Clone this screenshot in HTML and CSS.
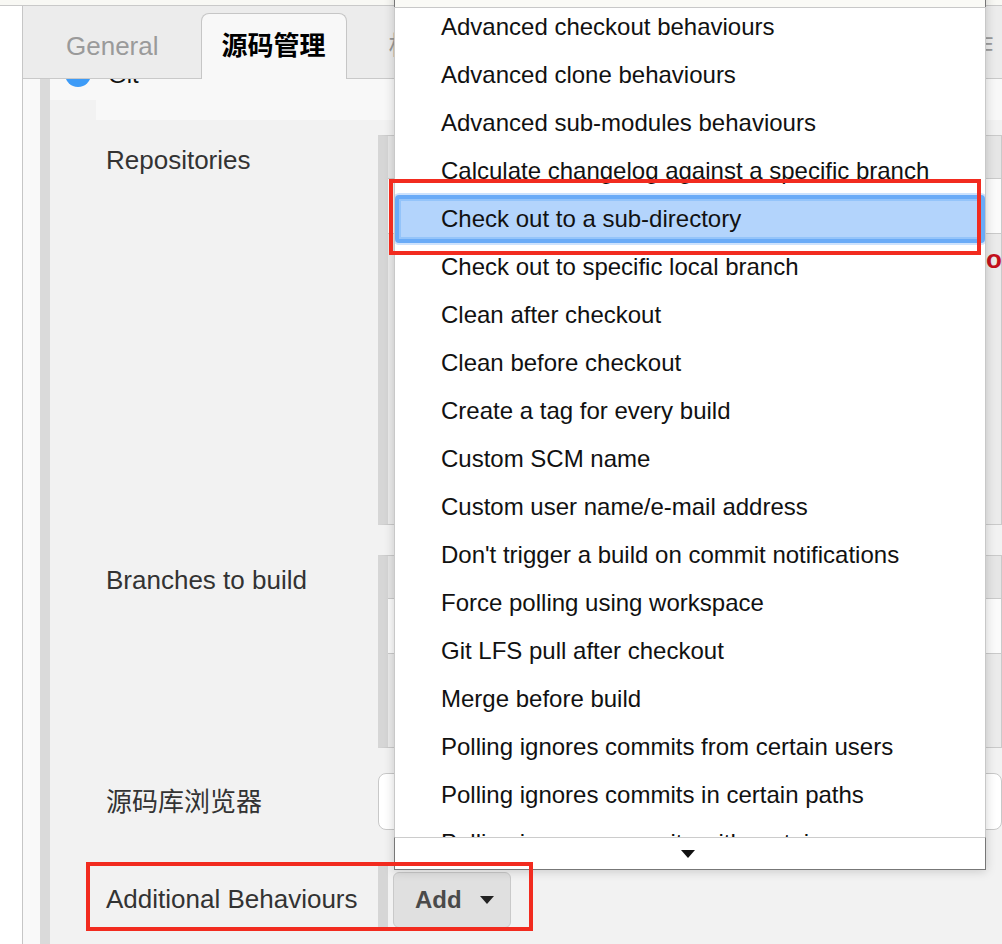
FILE: index.html
```html
<!DOCTYPE html>
<html lang="zh-CN">
<head>
<meta charset="utf-8">
<title>Jenkins - 源码管理</title>
<link rel="stylesheet" href="styles.css">
</head>
<body>
<div class="topstrip"></div>
<div class="panel">
  <div class="tabbar">
    <div class="tab">General</div>
    <div class="tab active">源码管理</div>
    <div class="tab">构建触发器</div>
    <div class="tab">构建环境</div>
    <div class="tab">构建</div>
    <div class="tab">构建后操作</div>
  </div>
  <div class="content">
    <div class="gutter"></div>
    <div class="stripe"></div>
    <div class="main">
      <div class="radio-row"><span class="radio"></span><span class="radio-label">Git</span></div>
      <div class="radio-body"></div>

      <div class="row row-repos">
        <div class="label">Repositories</div>
        <div class="field">
          <div class="chunk chunk-repos">
            <div class="chunk-head"></div>
            <div class="chunk-input"></div>
            <div class="error">onnect</div>
          </div>
        </div>
      </div>

      <div class="row row-branches">
        <div class="label">Branches to build</div>
        <div class="field">
          <div class="chunk chunk-branches">
            <div class="chunk-head"></div>
            <div class="chunk-input"></div>
          </div>
        </div>
      </div>

      <div class="row row-browser">
        <div class="label">源码库浏览器</div>
        <div class="field">
          <div class="select"></div>
        </div>
      </div>

      <div class="row row-additional">
        <div class="label">Additional Behaviours</div>
        <div class="field field-add">
          <div class="add-bar"></div>
          <button class="add-btn">Add<span class="caret"></span></button>
        </div>
      </div>
    </div>
  </div>
</div>

<div class="menu">
  <div class="menu-top"></div>
  <div class="menu-list">
    <ul class="menu-items">
      <li>Advanced checkout behaviours</li>
      <li>Advanced clone behaviours</li>
      <li>Advanced sub-modules behaviours</li>
      <li>Calculate changelog against a specific branch</li>
      <li class="selected">Check out to a sub-directory</li>
      <li>Check out to specific local branch</li>
      <li>Clean after checkout</li>
      <li>Clean before checkout</li>
      <li>Create a tag for every build</li>
      <li>Custom SCM name</li>
      <li>Custom user name/e-mail address</li>
      <li>Don't trigger a build on commit notifications</li>
      <li>Force polling using workspace</li>
      <li>Git LFS pull after checkout</li>
      <li>Merge before build</li>
      <li>Polling ignores commits from certain users</li>
      <li>Polling ignores commits in certain paths</li>
      <li>Polling ignores commits with certain messages</li>
    </ul>
  </div>
  <div class="menu-bottom"><span class="menu-arrow"></span></div>
</div>

<div class="mark mark-item"></div>
<div class="mark mark-add"></div>
</body>
</html>
```

FILE: styles.css
```css
html, body {
  margin: 0;
  padding: 0;
  overflow: hidden;
}
body {
  width: 1002px;
  height: 944px;
  background: #ffffff;
  font-family: "Liberation Sans", "Noto Sans CJK SC", sans-serif;
  color: #333;
  position: relative;
}

.topstrip {
  height: 5px;
  background: #f8f8f4;
  border-bottom: 1px solid #c9c9c9;
}

.panel {
  margin-left: 22px;
  border-left: 1px solid #c6c6c6;
  height: 938px;
  display: flex;
  flex-direction: column;
  min-width: 0;
  overflow: hidden;
}

/* tabs */
.tabbar {
  height: 72px;
  flex-shrink: 0;
  background: #ececec;
  border-bottom: 1px solid #c9c9c9;
  display: flex;
  align-items: flex-end;
  padding-left: 22px;
  gap: 21px;
  white-space: nowrap;
}
.tab {
  flex-shrink: 0;
  height: 65px;
  line-height: 64px;
  padding: 0 20px;
  border: 1px solid transparent;
  border-bottom: none;
  margin-bottom: -1px;
  font-size: 26px;
  color: #9a9a9a;
}
.tab.active {
  background: #f8f8f8;
  border-color: #c6c6c6;
  border-radius: 8px 8px 0 0;
  color: #000;
  font-weight: bold;
}

/* content */
.content {
  flex: 1;
  display: flex;
  min-width: 0;
}
.gutter {
  width: 17px;
  flex-shrink: 0;
  background: #f9f9f9;
}
.stripe {
  width: 10px;
  flex-shrink: 0;
  background: #dadada;
}
.main {
  flex: 1;
  min-width: 0;
  background: #f2f2f2;
  display: flex;
  flex-direction: column;
}

.radio-row {
  height: 21px;
  flex-shrink: 0;
  background: #f8f8f8;
  overflow: hidden;
  display: flex;
  align-items: flex-start;
}
.radio {
  width: 26px;
  height: 26px;
  border-radius: 50%;
  background: #3d9bf7;
  margin-top: -18px;
  margin-left: 15px;
  flex-shrink: 0;
}
.radio-label {
  font-size: 24px;
  line-height: 26px;
  color: #111;
  margin-top: -17px;
  margin-left: 17px;
}
.radio-body {
  height: 20px;
  flex-shrink: 0;
  margin-left: 46px;
  background: #f8f8f8;
}

.row {
  display: flex;
  flex-shrink: 0;
}
.label {
  width: 328px;
  flex-shrink: 0;
  box-sizing: border-box;
  padding-left: 56px;
  font-size: 26px;
  line-height: 30px;
  color: #333;
  white-space: nowrap;
}
.field {
  flex: 1;
  min-width: 0;
  overflow: hidden;
}

.row-repos {
  margin-top: 15px;
  height: 390px;
}
.row-repos .label { padding-top: 10px; }

.row-branches {
  margin-top: 30px;
  height: 193px;
}
.row-branches .label { padding-top: 10px; }

.row-browser {
  margin-top: 25px;
  height: 57px;
  align-items: center;
}
.row-browser .field { align-self: stretch; }

.row-additional {
  margin-top: 32px;
  height: 66px;
}
.row-additional .label { padding-top: 22px; }

.chunk {
  height: 100%;
  box-sizing: border-box;
  border: 1px solid #cacaca;
  border-left: 10px solid #d6d6d6;
  background: #ebebeb;
}
.chunk-head {
  height: 42px;
  background: #e6e6e6;
}
.chunk-input {
  height: 54px;
  background: #fbfbfb;
  border-top: 1px solid #cacaca;
  border-bottom: 1px solid #cacaca;
}
.error {
  margin-top: 10px;
  padding-left: 598px;
  font-size: 26px;
  line-height: 30px;
  font-weight: bold;
  color: #c4101c;
  white-space: nowrap;
}

.select {
  height: 100%;
  box-sizing: border-box;
  background: #fff;
  border: 1px solid #c8c8c8;
  border-radius: 8px;
}

.field-add {
  display: flex;
  align-items: flex-start;
}
.add-bar {
  width: 10px;
  height: 66px;
  flex-shrink: 0;
  background: #d6d6d6;
}
.add-btn {
  margin-top: 10px;
  margin-left: 5px;
  width: 118px;
  height: 56px;
  flex-shrink: 0;
  box-sizing: border-box;
  background: #e0e0e0;
  border: 1px solid #c9c9c9;
  border-radius: 6px;
  padding: 0 0 0 21px;
  font-family: "Liberation Sans", sans-serif;
  font-size: 24px;
  font-weight: bold;
  color: #4a4a4a;
  display: flex;
  align-items: center;
}
.caret {
  width: 0;
  height: 0;
  margin-left: 18px;
  border-left: 7px solid transparent;
  border-right: 7px solid transparent;
  border-top: 8px solid #222;
}

/* dropdown menu overlay */
.menu {
  position: absolute;
  left: 394px;
  top: -30px;
  width: 592px;
  background: #fff;
  box-shadow: 0 1px 10px rgba(0, 0, 0, 0.18);
}
.menu-top {
  height: 37px;
  background: #fafaf6;
  border-left: 1px solid #777;
  border-right: 1px solid #777;
}
.menu-list {
  height: 829px;
  overflow: hidden;
  border-top: 1px solid #c8c8c8;
  border-left: 1px solid #c8c8c8;
  border-right: 1px solid #c8c8c8;
}
.menu-items {
  list-style: none;
  margin: -5px 0 0 0;
  padding: 0;
}
.menu-items li {
  height: 48px;
  line-height: 48px;
  padding-left: 46px;
  font-size: 24px;
  color: #111;
  white-space: nowrap;
  box-sizing: border-box;
}
.menu-items li.selected {
  background: #b3d4fc;
  border: 4px solid #6aabf7;
  border-radius: 4px;
  line-height: 40px;
  padding-left: 42px;
  box-shadow: 0 0 0 2px #cde2fd, inset 0 0 0 2px #94c4fa;
}
.menu-bottom {
  height: 31px;
  background: #fff;
  border-top: 1px solid #cccccc;
  border-left: 1px solid #777;
  border-right: 1px solid #777;
  border-bottom: 1px solid #777;
  display: flex;
  justify-content: center;
  align-items: center;
}
.menu-arrow {
  width: 0;
  height: 0;
  border-left: 7px solid transparent;
  border-right: 7px solid transparent;
  border-top: 8px solid #111;
  margin-left: -4px;
}

/* red annotation boxes */
.mark {
  position: absolute;
  border: 4px solid #f22b1f;
  box-sizing: border-box;
}
.mark-item {
  left: 389px;
  top: 179px;
  width: 592px;
  height: 76px;
}
.mark-add {
  left: 86px;
  top: 862px;
  width: 447px;
  height: 69px;
}
```
